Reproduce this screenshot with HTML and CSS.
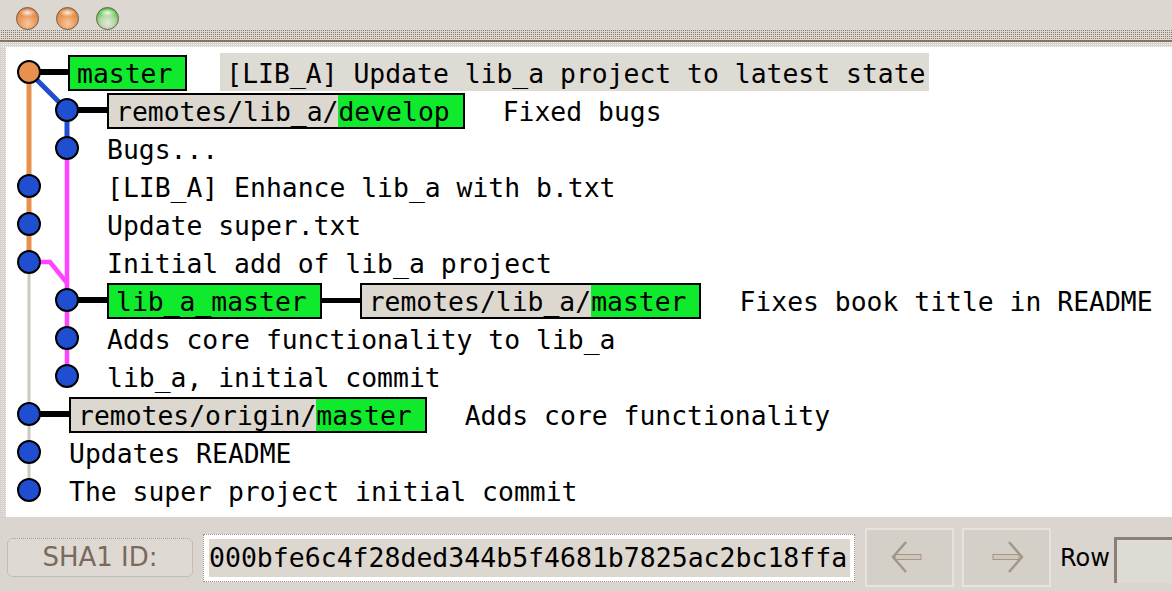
FILE: index.html
```html
<!DOCTYPE html>
<html>
<head>
<meta charset="utf-8">
<title>gitk</title>
<link rel="stylesheet" href="styles.css">
</head>
<body>
<div class="window">
  <div class="titlebar">
    <span class="light close"></span>
    <span class="light mini"></span>
    <span class="light zoom"></span>
  </div>
  <div class="band-dark"></div>
  <div class="band-line"></div>
  <div class="band-light"></div>

  <div class="canvas">
    <div class="strip"></div>
    <div class="plot">
      <svg class="graph" width="110" height="470" viewBox="0 0 110 470">
        <g fill="none" stroke-linejoin="miter">
          <path d="M23 215 V443" stroke="#cdc8c0" stroke-width="3"/>
          <path d="M23 25 V215" stroke="#e8914f" stroke-width="5"/>
          <path d="M23 25 L61 63 V101" stroke="#1f4fd0" stroke-width="5"/>
          <path d="M61 101 V329" stroke="#ff44ff" stroke-width="4.5"/>
          <path d="M23 215 H44 L61 236" stroke="#ff44ff" stroke-width="4.5"/>
        </g>
        <g stroke="#000" stroke-width="2" fill="#1f4fd0">
          <circle cx="23" cy="25" r="11" fill="#e8914f"/>
          <circle cx="61" cy="63" r="11"/>
          <circle cx="61" cy="101" r="11"/>
          <circle cx="23" cy="139" r="11"/>
          <circle cx="23" cy="177" r="11"/>
          <circle cx="23" cy="215" r="11"/>
          <circle cx="61" cy="253" r="11"/>
          <circle cx="61" cy="291" r="11"/>
          <circle cx="61" cy="329" r="11"/>
          <circle cx="23" cy="367" r="11"/>
          <circle cx="23" cy="405" r="11"/>
          <circle cx="23" cy="443" r="11"/>
        </g>
      </svg>

      <div class="rows">
        <div class="row">
          <span class="conn col0 first-conn"></span>
          <span class="tag"><span class="part green first last">master</span></span>
          <span class="msg sel">[LIB_A] Update lib_a project to latest state</span>
        </div>
        <div class="row">
          <span class="conn col1"></span>
          <span class="tag"><span class="part grey first">remotes/lib_a/</span><span class="part green last">develop</span></span>
          <span class="msg after">Fixed bugs</span>
        </div>
        <div class="row"><span class="msg text1">Bugs...</span></div>
        <div class="row"><span class="msg text1">[LIB_A] Enhance lib_a with b.txt</span></div>
        <div class="row"><span class="msg text1">Update super.txt</span></div>
        <div class="row"><span class="msg text1">Initial add of lib_a project</span></div>
        <div class="row">
          <span class="conn col1"></span>
          <span class="tag"><span class="part green first last">lib_a_master</span></span>
          <span class="conn mid"></span>
          <span class="tag"><span class="part grey first">remotes/lib_a/</span><span class="part green last">master</span></span>
          <span class="msg after">Fixes book title in README</span>
        </div>
        <div class="row"><span class="msg text1">Adds core functionality to lib_a</span></div>
        <div class="row"><span class="msg text1">lib_a, initial commit</span></div>
        <div class="row">
          <span class="conn col0"></span>
          <span class="tag"><span class="part grey first">remotes/origin/</span><span class="part green last">master</span></span>
          <span class="msg after">Adds core functionality</span>
        </div>
        <div class="row"><span class="msg text0">Updates README</span></div>
        <div class="row"><span class="msg text0">The super project initial commit</span></div>
      </div>
    </div>
  </div>

  <div class="bar">
    <div class="sha-btn">SHA1 ID:</div>
    <div class="sha-entry"><span class="sha-text">000bfe6c4f28ded344b5f4681b7825ac2bc18ffa</span></div>
    <div class="nav-btn back">
      <svg width="85" height="55" viewBox="0 0 85 55">
        <rect x="28" y="24.5" width="26" height="5" fill="#cfc6bc" stroke="#a39688" stroke-width="1"/>
        <path d="M39 12 L26 27 L39 42" fill="none" stroke="#a39688" stroke-width="2.5"/>
      </svg>
    </div>
    <div class="nav-btn fwd">
      <svg width="85" height="55" viewBox="0 0 85 55">
        <rect x="29" y="24.5" width="26" height="5" fill="#cfc6bc" stroke="#a39688" stroke-width="1"/>
        <path d="M45 12 L58 27 L45 42" fill="none" stroke="#a39688" stroke-width="2.5"/>
      </svg>
    </div>
    <div class="row-label">Row</div>
    <div class="row-entry"></div>
  </div>
</div>
</body>
</html>
```

FILE: styles.css
```css
html, body {
  margin: 0;
  padding: 0;
  width: 1172px;
  height: 591px;
  overflow: hidden;
  background: #dbd7d0;
}

.window {
  width: 1172px;
  height: 591px;
  display: flex;
  flex-direction: column;
  overflow: hidden;
}

/* ---------- title bar ---------- */
.titlebar {
  height: 30px;
  box-sizing: border-box;
  padding: 7px 0 0 16px;
  display: flex;
  gap: 17px;
  background: #dcd8d1;
}

.light {
  width: 23px;
  height: 23px;
  box-sizing: border-box;
  border-radius: 50%;
  border: 1.5px solid #6f5a48;
}

.light.close,
.light.mini {
  background:
    radial-gradient(ellipse 8px 4px at 50% 22%, rgba(255,255,255,0.85), rgba(255,255,255,0) 100%),
    radial-gradient(circle at 50% 75%, #f7c9a0 0%, #e99a5c 45%, #d8752f 100%);
}

.light.zoom {
  background:
    radial-gradient(ellipse 8px 4px at 50% 22%, rgba(255,255,255,0.85), rgba(255,255,255,0) 100%),
    radial-gradient(circle at 50% 70%, #e8e8dc 0%, #b6d8a8 40%, #52c848 75%, #8a8a70 100%);
}

.band-dark {
  height: 10px;
  background: repeating-conic-gradient(#8c7c6c 0 25%, #dcd8d0 0 100%) 0 0 / 2px 2px;
}

.band-line {
  height: 2px;
  background: #857464;
}

.band-light {
  height: 5px;
  background: repeating-conic-gradient(#f4f2ee 0 25%, #d8d4cc 0 100%) 0 0 / 2px 2px;
}

/* ---------- graph canvas ---------- */
.canvas {
  height: 470px;
  display: flex;
}

.strip {
  width: 6px;
  background: repeating-conic-gradient(#eeebe6 0 25%, #d6d2ca 0 100%) 0 0 / 2px 2px;
}

.plot {
  flex: 1;
  position: relative;
  background: #ffffff;
  padding-top: 6px;
  box-sizing: border-box;
}

.graph {
  position: absolute;
  left: 0;
  top: 0;
  z-index: 2;
}

.rows {
  display: flex;
  flex-direction: column;
  font-family: "DejaVu Sans Mono", "Liberation Mono", monospace;
  font-size: 26.4px;
  color: #000;
}

.row {
  height: 38px;
  display: flex;
  align-items: stretch;
  white-space: pre;
}

.conn {
  align-self: center;
  height: 6px;
  width: 40px;
  background: #000;
}

.conn.col0 { margin-left: 23px; }
.conn.col1 { margin-left: 61px; }
.conn.first-conn { width: 39px; }
.conn.mid  { width: 38px; height: 5px; }

.tag {
  margin-top: 2px;
  height: 36px;
  box-sizing: border-box;
  border: 2px solid #000;
  display: flex;
  line-height: 31px;
  padding-top: 1px;
  background: #dcd8d0;
}

.tag .part {
  display: block;
}

.tag .part.first { padding-left: 7px; }
.tag .part.last  { padding-right: 13px; }

.part.green { background: #10ea2c; margin-top: -1px; padding-top: 1px; }
.part.grey  { background: #dcd8d0; }

.msg {
  line-height: 34px;
  padding-top: 4px;
}

.msg.after { margin-left: 38px; }
.msg.text0 { margin-left: 63px; }
.msg.text1 { margin-left: 101px; }

.msg.sel {
  margin-left: 33px;
  padding-left: 6px;
  padding-right: 4px;
  background: #dedad4;
}

/* ---------- bottom bar ---------- */
.bar {
  flex: 1;
  display: flex;
  align-items: center;
  padding: 7px 0 0 7px;
  box-sizing: border-box;
  background: #dad6cf;
  font-family: "DejaVu Sans", "Liberation Sans", sans-serif;
}

.bar > * {
  flex-shrink: 0;
}

.sha-btn {
  width: 186px;
  height: 39px;
  box-sizing: border-box;
  border: 1px dotted #a89e94;
  border-radius: 6px;
  background: #dedad3;
  color: #7b6a5c;
  font-size: 26px;
  line-height: 37px;
  text-align: center;
}

.sha-entry {
  margin-left: 10px;
  width: 652px;
  height: 48px;
  box-sizing: border-box;
  border: 1px dotted #9a8e84;
  background: #ffffff;
  padding: 4px 4px 4px 5px;
  display: flex;
}

.sha-text {
  flex: 1;
  background: #dcd8d0;
  font-family: "DejaVu Sans Mono", "Liberation Mono", monospace;
  font-size: 26.5px;
  line-height: 38px;
  color: #000;
  white-space: pre;
}

.nav-btn {
  width: 89px;
  height: 59px;
  box-sizing: border-box;
  border: 2px solid #e6e3de;
  background: #d4cfc7;
  display: flex;
}

.nav-btn.back { margin-left: 10px; }
.nav-btn.fwd  { margin-left: 8px; }

.row-label {
  margin-left: 9px;
  font-size: 24px;
  color: #000;
}

.row-entry {
  margin-left: 4px;
  align-self: flex-start;
  margin-top: 13px;
  width: 80px;
  height: 46px;
  box-sizing: border-box;
  border-top: 3px solid #8c8074;
  border-left: 3px solid #8c8074;
  background: #dedad4;
}
```
